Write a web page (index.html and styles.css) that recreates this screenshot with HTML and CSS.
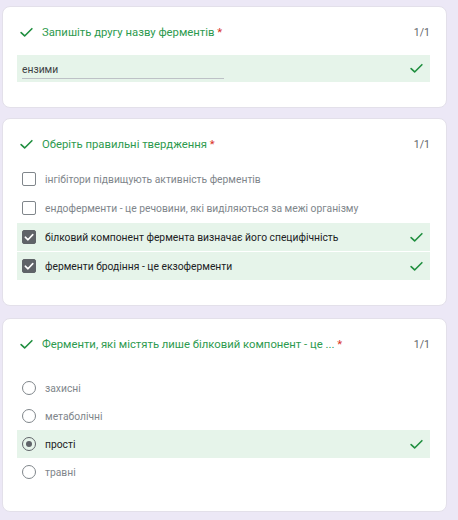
FILE: index.html
```html
<!DOCTYPE html>
<html lang="uk">
<head>
<meta charset="utf-8">
<link rel="stylesheet" href="styles.css">
</head>
<body>
<svg width="0" height="0" class="defs">
  <defs>
    <symbol id="ok" viewBox="0 0 14 11">
      <path d="M1.2 5.6 L5 9.2 L12.8 1.4" fill="none" stroke="currentColor" stroke-width="1.7" stroke-linecap="round" stroke-linejoin="round"/>
    </symbol>
  </defs>
</svg>
<main class="page">
  <section class="card">
    <div class="head">
      <svg class="hcheck"><use href="#ok"/></svg>
      <span class="title">Запишіть другу назву ферментів <span class="req">*</span></span>
      <span class="score">1/1</span>
    </div>
    <div class="answer text-answer">
      <span class="field">ензими</span>
      <svg class="rcheck"><use href="#ok"/></svg>
    </div>
  </section>

  <section class="card">
    <div class="head">
      <svg class="hcheck"><use href="#ok"/></svg>
      <span class="title">Оберіть правильні твердження <span class="req">*</span></span>
      <span class="score">1/1</span>
    </div>
    <div class="list list-check">
      <div class="opt"><span class="box"></span><span class="label">інгібітори підвищують активність ферментів</span></div>
      <div class="opt"><span class="box"></span><span class="label">ендоферменти - це речовини, які виділяються за межі організму</span></div>
      <div class="opt sel"><span class="box on"><svg viewBox="0 0 14 14"><path d="M3.3 7.2 L6 9.8 L10.8 4.6" fill="none" stroke="#fff" stroke-width="1.6" stroke-linecap="round" stroke-linejoin="round"/></svg></span><span class="label">білковий компонент фермента визначає його специфічність</span><svg class="rcheck"><use href="#ok"/></svg></div>
      <div class="opt sel"><span class="box on"><svg viewBox="0 0 14 14"><path d="M3.3 7.2 L6 9.8 L10.8 4.6" fill="none" stroke="#fff" stroke-width="1.6" stroke-linecap="round" stroke-linejoin="round"/></svg></span><span class="label">ферменти бродіння - це екзоферменти</span><svg class="rcheck"><use href="#ok"/></svg></div>
    </div>
  </section>

  <section class="card">
    <div class="head">
      <svg class="hcheck"><use href="#ok"/></svg>
      <span class="title">Ферменти, які містять лише білковий компонент - це ... <span class="req">*</span></span>
      <span class="score">1/1</span>
    </div>
    <div class="list list-radio">
      <div class="opt"><span class="radio"></span><span class="label">захисні</span></div>
      <div class="opt"><span class="radio"></span><span class="label">метаболічні</span></div>
      <div class="opt sel"><span class="radio on"></span><span class="label">прості</span><svg class="rcheck"><use href="#ok"/></svg></div>
      <div class="opt"><span class="radio"></span><span class="label">травні</span></div>
    </div>
  </section>
</main>
</body>
</html>
```

FILE: styles.css
```css
* { box-sizing: border-box; }
html, body { margin: 0; padding: 0; }
body {
  background: #ece8f6;
  font-family: Roboto, "Noto Sans", "Liberation Sans", sans-serif;
  color: #202124;
}
.defs { position: absolute; width: 0; height: 0; overflow: hidden; }
.page {
  display: flex;
  flex-direction: column;
  padding: 6px 0 0 2px;
  width: 447px;
}
.card {
  background: #fff;
  border-radius: 8px;
  border: 1px solid #e3e0ea;
  padding: 13px 16px 25px 14px;
  display: flex;
  flex-direction: column;
}
.card + .card { margin-top: 10px; }
.card:nth-child(3) { margin-top: 12px; }
.head {
  height: 24px;
  display: flex;
  align-items: center;
}
.hcheck {
  width: 13px;
  height: 11px;
  color: #1e8e3e;
  margin-left: 3px;
  margin-right: 9px;
  flex: none;
}
.title {
  flex: 1;
  font-size: 11.3px;
  color: #2d9a4e;
}
.req { color: #d93025; }
.score {
  font-size: 10.5px;
  color: #5f6368;
}
.answer {
  margin-top: 11px;
  height: 27px;
  background: #e6f4ea;
  display: flex;
  align-items: center;
  padding: 0 7px 0 5px;
}
.field {
  width: 202px;
  font-size: 10.3px;
  color: #3c4043;
  border-bottom: 1px solid #bdc1c6;
  padding-bottom: 2px;
  margin-top: 5px;
  margin-right: auto;
}
.rcheck {
  width: 13px;
  height: 11px;
  color: #1e8e3e;
  flex: none;
}
.list { display: flex; flex-direction: column; }
.list-check { margin-top: 9px; gap: 1px; }
.list-radio { margin-top: 18px; }
.opt {
  height: 28px;
  display: flex;
  align-items: center;
  padding: 0 7px 0 5px;
  font-size: 10.3px;
  color: #80868b;
}
.opt.sel {
  background: #e6f4ea;
  color: #202124;
}
.opt .label { margin-right: auto; }
.box {
  width: 14px;
  height: 14px;
  border: 1.5px solid #80868b;
  border-radius: 2px;
  margin-right: 9px;
  flex: none;
}
.box.on {
  background: #5f6368;
  border-color: #5f6368;
  display: flex;
  padding: 0;
}
.box.on svg { margin: -1.5px; width: 14px; height: 14px; }
.radio {
  width: 14px;
  height: 14px;
  border: 1.5px solid #80868b;
  border-radius: 50%;
  margin-right: 9px;
  flex: none;
  display: flex;
  align-items: center;
  justify-content: center;
}
.radio.on { border-color: #5f6368; }
.radio.on::after {
  content: "";
  width: 6px;
  height: 6px;
  border-radius: 50%;
  background: #5f6368;
}
```
